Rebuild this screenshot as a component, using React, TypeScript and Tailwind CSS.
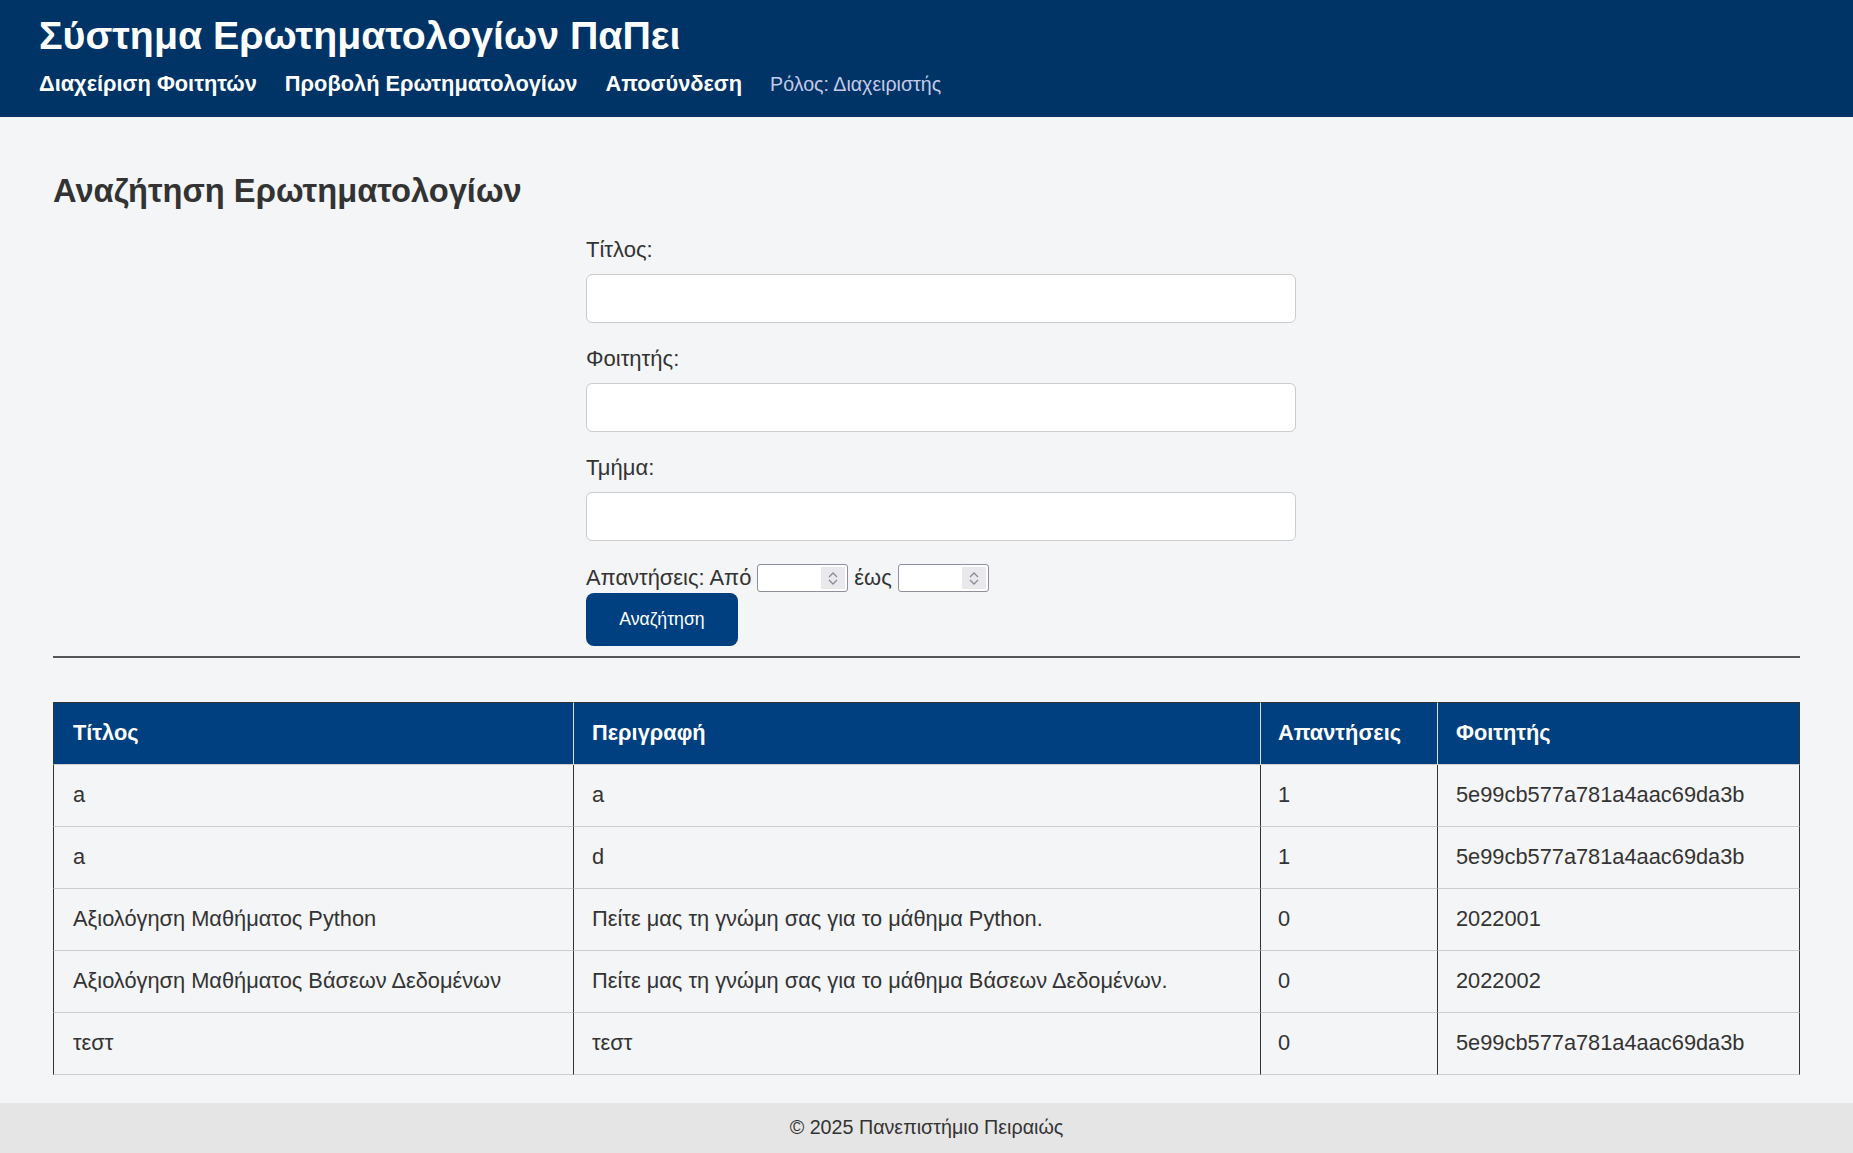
import React from 'react';

const rows = [
    { title: 'a', description: 'a', answers: 1, student: '5e99cb577a781a4aac69da3b' },
    { title: 'a', description: 'd', answers: 1, student: '5e99cb577a781a4aac69da3b' },
    { title: 'Αξιολόγηση Μαθήματος Python', description: 'Πείτε μας τη γνώμη σας για το μάθημα Python.', answers: 0, student: '2022001' },
    { title: 'Αξιολόγηση Μαθήματος Βάσεων Δεδομένων', description: 'Πείτε μας τη γνώμη σας για το μάθημα Βάσεων Δεδομένων.', answers: 0, student: '2022002' },
    { title: 'τεστ', description: 'τεστ', answers: 0, student: '5e99cb577a781a4aac69da3b' },
];

const NumberBox = () => (
    <div className="flex items-stretch w-[91px] h-[28px] bg-white border border-[#8f8f9d] rounded-[3px] p-[2px]">
        <div className="flex-1" />
        <div className="w-[24px] bg-[#e9e9ed] flex flex-col items-center justify-center gap-[1px]">
            <svg width="10" height="6" viewBox="0 0 10 6" fill="none" stroke="#8a8a94" strokeWidth="1.3"><path d="M1 5l4-4 4 4" /></svg>
            <svg width="10" height="6" viewBox="0 0 10 6" fill="none" stroke="#8a8a94" strokeWidth="1.3"><path d="M1 1l4 4 4-4" /></svg>
        </div>
    </div>
);

const App: React.FC = () => {
    return (
        <div className="min-h-screen flex flex-col bg-[#f4f5f7] text-[#333] font-['Liberation_Sans',Arial,sans-serif]">
            <header className="bg-[#003366] text-white h-[117px] px-[39px] pt-[10px]">
                <h1 className="text-[39.3px] font-bold leading-[50px]">Σύστημα Ερωτηματολογίων ΠαΠει</h1>
                <nav className="flex items-center gap-[28px] mt-[11px] text-[21.8px] leading-[26px]">
                    <a className="font-bold">Διαχείριση Φοιτητών</a>
                    <a className="font-bold">Προβολή Ερωτηματολογίων</a>
                    <a className="font-bold">Αποσύνδεση</a>
                    <span className="text-[19.6px] text-[#c5cae9]">Ρόλος: Διαχειριστής</span>
                </nav>
            </header>

            <main className="flex-1 px-[53px] pt-[56px]">
                <h2 className="text-[32.7px] font-bold leading-[36px]">Αναζήτηση Ερωτηματολογίων</h2>

                <form className="w-[681px] mx-auto mt-[30px]" onSubmit={e => e.preventDefault()}>
                    {['Τίτλος:', 'Φοιτητής:', 'Τμήμα:'].map(label => (
                        <div key={label} className="mb-[25px]">
                            <label className="block text-[22px] leading-[22px] mb-[13px]">{label}</label>
                            <input type="text" className="block w-[710px] h-[49px] bg-white border border-[#ccc] rounded-[6px] px-3 outline-none" />
                        </div>
                    ))}
                    <div className="flex items-center gap-[6px] -mt-[2px] text-[21.9px] leading-[28px]">
                        <span>Απαντήσεις: Από</span>
                        <NumberBox />
                        <span>έως</span>
                        <NumberBox />
                    </div>
                    <button type="submit" className="mt-[1px] w-[152px] h-[53px] bg-[#004080] text-white text-[17.7px] rounded-[8px]">Αναζήτηση</button>
                </form>

                <hr className="mt-[10px] border-t-2 border-[#555]" />

                <table className="w-full mt-[44px] border-separate border-spacing-0 text-[21.8px] table-fixed">
                    <thead>
                        <tr className="bg-[#004080] text-white text-left">
                            <th className="w-[520px] h-[63px] px-[19px] font-bold border-t border-l border-[#333] border-b border-b-[#ccc]">Τίτλος</th>
                            <th className="w-[687px] h-[63px] px-[18px] font-bold border-t border-t-[#333] border-l border-l-[#ddd] border-b border-b-[#ccc]">Περιγραφή</th>
                            <th className="w-[177px] h-[63px] px-[17px] font-bold border-t border-t-[#333] border-l border-l-[#ddd] border-b border-b-[#ccc]">Απαντήσεις</th>
                            <th className="h-[63px] px-[18px] font-bold border-t border-t-[#333] border-l border-l-[#ddd] border-r border-r-[#333] border-b border-b-[#ccc]">Φοιτητής</th>
                        </tr>
                    </thead>
                    <tbody>
                        {rows.map((row, i) => (
                            <tr key={i}>
                                <td className="h-[62px] px-[19px] border-l border-l-[#333] border-b border-b-[#ccc]">{row.title}</td>
                                <td className="h-[62px] px-[18px] border-l border-l-[#333] border-b border-b-[#ccc]">{row.description}</td>
                                <td className="h-[62px] px-[17px] border-l border-l-[#333] border-b border-b-[#ccc]">{row.answers}</td>
                                <td className="h-[62px] px-[18px] border-l border-l-[#333] border-r border-r-[#333] border-b border-b-[#ccc]">{row.student}</td>
                            </tr>
                        ))}
                    </tbody>
                </table>
            </main>

            <footer className="mt-[27px] h-[50px] bg-[#e5e5e5] flex items-center justify-center text-[19.7px]">
                © 2025 Πανεπιστήμιο Πειραιώς
            </footer>
        </div>
    );
};

export default App;
